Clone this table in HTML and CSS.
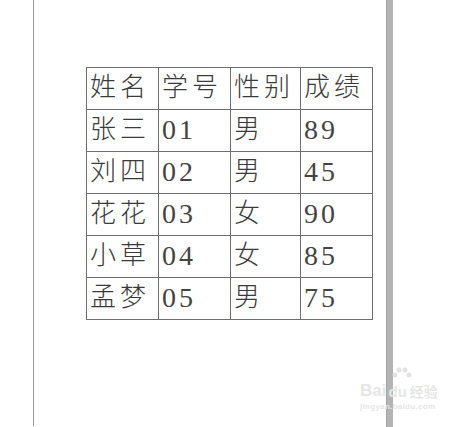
FILE: index.html
```html
<!DOCTYPE html>
<html lang="zh">
<head>
<meta charset="utf-8">
<link rel="stylesheet" href="styles.css">
</head>
<body>
<div class="view">
  <div class="gutter"></div>
  <div class="page">
    <table class="grid">
      <colgroup>
        <col class="c1"><col class="c2"><col class="c3"><col class="c4">
      </colgroup>
      <tr><td>姓名</td><td>学号</td><td>性别</td><td>成绩</td></tr>
      <tr><td>张三</td><td class="num">01</td><td>男</td><td class="num">89</td></tr>
      <tr><td>刘四</td><td class="num">02</td><td>男</td><td class="num">45</td></tr>
      <tr><td>花花</td><td class="num">03</td><td>女</td><td class="num">90</td></tr>
      <tr><td>小草</td><td class="num">04</td><td>女</td><td class="num">85</td></tr>
      <tr><td>孟梦</td><td class="num">05</td><td>男</td><td class="num">75</td></tr>
    </table>
  </div>
  <div class="bar"></div>
  <div class="rest"></div>
  <div class="watermark">
    <svg class="wm-icon" width="22" height="18" viewBox="0 0 22 18">
      <circle cx="5" cy="9" r="2.5" fill="#e4e4e4"/>
      <circle cx="9" cy="4" r="2.5" fill="#e4e4e4"/>
      <circle cx="15" cy="4" r="2.5" fill="#e4e4e4"/>
      <circle cx="19" cy="9" r="2.5" fill="#e4e4e4"/>
    </svg>
    <div class="wm-top"><span class="wm-bai">Bai</span><span class="wm-paw">du</span><span class="wm-cn">经验</span></div>
    <div class="wm-url">jingyan.baidu.com</div>
  </div>
</div>
</body>
</html>
```
FILE: styles.css
```css
html, body {
  margin: 0;
  padding: 0;
  background: #ffffff;
}
.view {
  position: relative;
  display: flex;
  width: 475px;
  height: 427px;
  overflow: hidden;
}
.gutter {
  width: 33px;
  flex: none;
}
.page {
  width: 353px;
  flex: none;
  border-left: 1px solid #9a9a9a;
  height: 426px;
  padding: 67px 0 0 52px;
  box-sizing: border-box;
}
.bar {
  width: 7px;
  flex: none;
  background: #b4b4b4;
  border-left: 1px solid #a4a4a4;
  box-sizing: border-box;
}
.rest {
  flex: 1;
}
.grid {
  border-collapse: collapse;
  table-layout: fixed;
  font-family: "Liberation Serif", "Noto Sans CJK SC", serif;
  font-size: 26px;
  color: #3a3a3a;
}
.grid col.c1 { width: 72px; }
.grid col.c2 { width: 72px; }
.grid col.c3 { width: 70px; }
.grid col.c4 { width: 72px; }
.grid td {
  border: 1px solid #6e6e6e;
  height: 39px;
  padding: 0 0 2px 3px;
  letter-spacing: 4px;
  line-height: 1;
  vertical-align: middle;
  white-space: nowrap;
  font-weight: 300;
}
.grid td.num {
  font-size: 28px;
  letter-spacing: 3px;
  color: #444;
}
.watermark {
  position: absolute;
  left: 360px;
  top: 366px;
  color: #e6e6e6;
  font-family: "Liberation Sans", "Noto Sans CJK SC", sans-serif;
  line-height: 1;
}
.wm-icon {
  display: block;
  margin-left: 30px;
  margin-bottom: -2px;
}
.wm-top {
  display: flex;
  align-items: flex-end;
  font-size: 17px;
  font-weight: bold;
}
.wm-paw {
  font-size: 15px;
  margin-left: 2px;
}
.wm-cn {
  font-size: 14px;
  margin-left: 3px;
}
.wm-url {
  font-size: 8px;
  margin-top: 4px;
  font-weight: bold;
  letter-spacing: 0.3px;
}
```
